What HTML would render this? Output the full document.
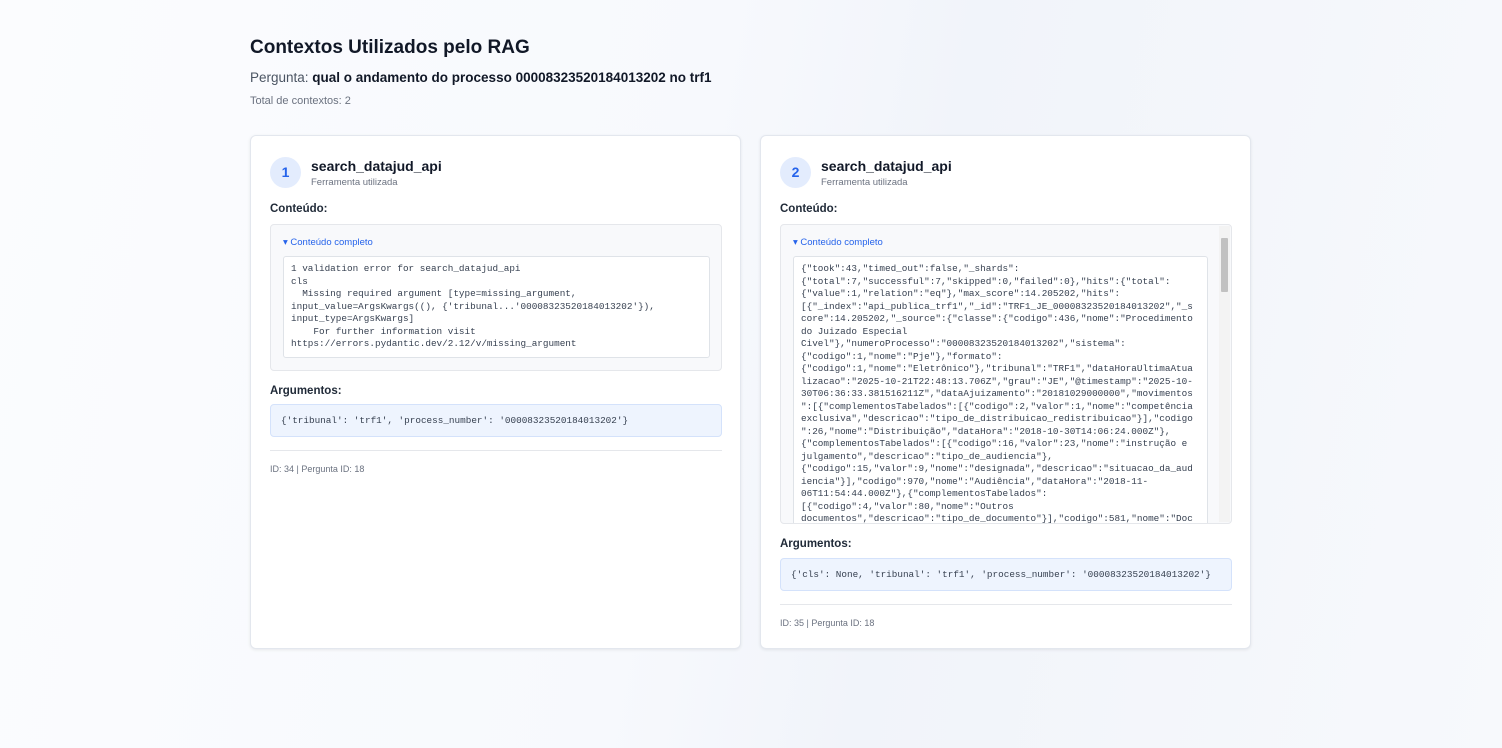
<!DOCTYPE html>
<html><head><meta charset="utf-8"><style>
*{box-sizing:border-box;margin:0;padding:0}
body{width:1502px;height:748px;overflow:hidden;font-family:"Liberation Sans",sans-serif;color:#111827;background:linear-gradient(100deg,#fbfcfe 0%,#f7f9fd 45%,#f1f4fa 60%,#f7f9fc 100%);position:relative}
h1{position:absolute;left:250px;top:37px;font-size:19px;font-weight:bold;color:#111827}
.q{position:absolute;left:250px;top:70px;font-size:13.5px;color:#4b5563}
.q b{color:#111827;font-weight:bold}
.t{position:absolute;left:250px;top:95px;font-size:11px;color:#6b7280}
.card{position:absolute;top:135px;width:491px;height:514px;background:#fff;border:1px solid #e3e7ee;border-radius:6px;box-shadow:0 1px 3px rgba(0,0,0,.08)}
.num{position:absolute;left:19px;top:21px;width:31px;height:31px;border-radius:50%;background:#e3ecfd;color:#2563eb;font-size:14px;text-align:center;line-height:31px;font-weight:bold}
.tool{position:absolute;left:60px;top:22px;font-size:14px;font-weight:bold}
.sub{position:absolute;left:60px;top:41px;font-size:9.5px;color:#6b7280}
.lbl{position:absolute;left:19px;font-size:11.5px;font-weight:bold;color:#1f2937}
.box{position:absolute;left:19px;width:452px;background:#f8f9fb;border:1px solid #e5e7eb;border-radius:4px}
.sum{position:absolute;left:12px;top:12px;font-size:9.5px;color:#2563eb}
pre{position:absolute;left:12px;width:427px;background:#fff;border:1px solid #dfe3e8;border-radius:3px;font-family:"Liberation Mono",monospace;font-size:9.33px;line-height:12.5px;color:#374151;padding:6px 7px;overflow:hidden;white-space:pre}
.args{position:absolute;left:19px;width:452px;height:33px;background:#eef4fe;border:1px solid #d4e2fb;border-radius:4px;font-family:"Liberation Mono",monospace;font-size:9.33px;color:#374151;padding:0 10px;line-height:31px}
.hr{position:absolute;left:19px;width:452px;border-top:1px solid #e5e7eb}
.id{position:absolute;left:19px;font-size:9px;color:#6b7280}
.sb{position:absolute;right:1px;top:1px;width:11px;bottom:1px;background:#f3f3f3}
.sb i{position:absolute;left:2px;top:12px;width:7px;height:54px;background:#c1c1c1;border-radius:1px}
</style></head><body>
<h1>Contextos Utilizados pelo RAG</h1>
<div class="q">Pergunta: <b>qual o andamento do processo 00008323520184013202 no trf1</b></div>
<div class="t">Total de contextos: 2</div>

<div class="card" style="left:250px">
<div class="num">1</div><div class="tool">search_datajud_api</div><div class="sub">Ferramenta utilizada</div>
<div class="lbl" style="top:67px">Conteúdo:</div>
<div class="box" style="top:88px;height:147px">
<div class="sum">▾ Conteúdo completo</div>
<pre style="top:31px;height:102px">1 validation error for search_datajud_api
cls
  Missing required argument [type=missing_argument,
input_value=ArgsKwargs((), {'tribunal...'00008323520184013202'}),
input_type=ArgsKwargs]
    For further information visit
https://errors.pydantic.dev/2.12/v/missing_argument</pre>
</div>
<div class="lbl" style="top:249px">Argumentos:</div>
<div class="args" style="top:268px">{'tribunal': 'trf1', 'process_number': '00008323520184013202'}</div>
<div class="hr" style="top:314px"></div>
<div class="id" style="top:328px">ID: 34 | Pergunta ID: 18</div>
</div>

<div class="card" style="left:760px">
<div class="num">2</div><div class="tool">search_datajud_api</div><div class="sub">Ferramenta utilizada</div>
<div class="lbl" style="top:67px">Conteúdo:</div>
<div class="box" style="top:88px;height:300px;overflow:hidden">
<div class="sum">▾ Conteúdo completo</div>
<pre style="top:31px;height:290px;width:415px">{"took":43,"timed_out":false,"_shards":
{"total":7,"successful":7,"skipped":0,"failed":0},"hits":{"total":
{"value":1,"relation":"eq"},"max_score":14.205202,"hits":
[{"_index":"api_publica_trf1","_id":"TRF1_JE_00008323520184013202","_s
core":14.205202,"_source":{"classe":{"codigo":436,"nome":"Procedimento
do Juizado Especial
Civel"},"numeroProcesso":"00008323520184013202","sistema":
{"codigo":1,"nome":"Pje"},"formato":
{"codigo":1,"nome":"Eletrônico"},"tribunal":"TRF1","dataHoraUltimaAtua
lizacao":"2025-10-21T22:48:13.706Z","grau":"JE","@timestamp":"2025-10-
30T06:36:33.381516211Z","dataAjuizamento":"20181029000000","movimentos
":[{"complementosTabelados":[{"codigo":2,"valor":1,"nome":"competência
exclusiva","descricao":"tipo_de_distribuicao_redistribuicao"}],"codigo
":26,"nome":"Distribuição","dataHora":"2018-10-30T14:06:24.000Z"},
{"complementosTabelados":[{"codigo":16,"valor":23,"nome":"instrução e
julgamento","descricao":"tipo_de_audiencia"},
{"codigo":15,"valor":9,"nome":"designada","descricao":"situacao_da_aud
iencia"}],"codigo":970,"nome":"Audiência","dataHora":"2018-11-
06T11:54:44.000Z"},{"complementosTabelados":
[{"codigo":4,"valor":80,"nome":"Outros
documentos","descricao":"tipo_de_documento"}],"codigo":581,"nome":"Doc</pre>
<div class="sb"><i></i></div>
</div>
<div class="lbl" style="top:402px">Argumentos:</div>
<div class="args" style="top:422px">{'cls': None, 'tribunal': 'trf1', 'process_number': '00008323520184013202'}</div>
<div class="hr" style="top:468px"></div>
<div class="id" style="top:482px">ID: 35 | Pergunta ID: 18</div>
</div>
</body></html>
